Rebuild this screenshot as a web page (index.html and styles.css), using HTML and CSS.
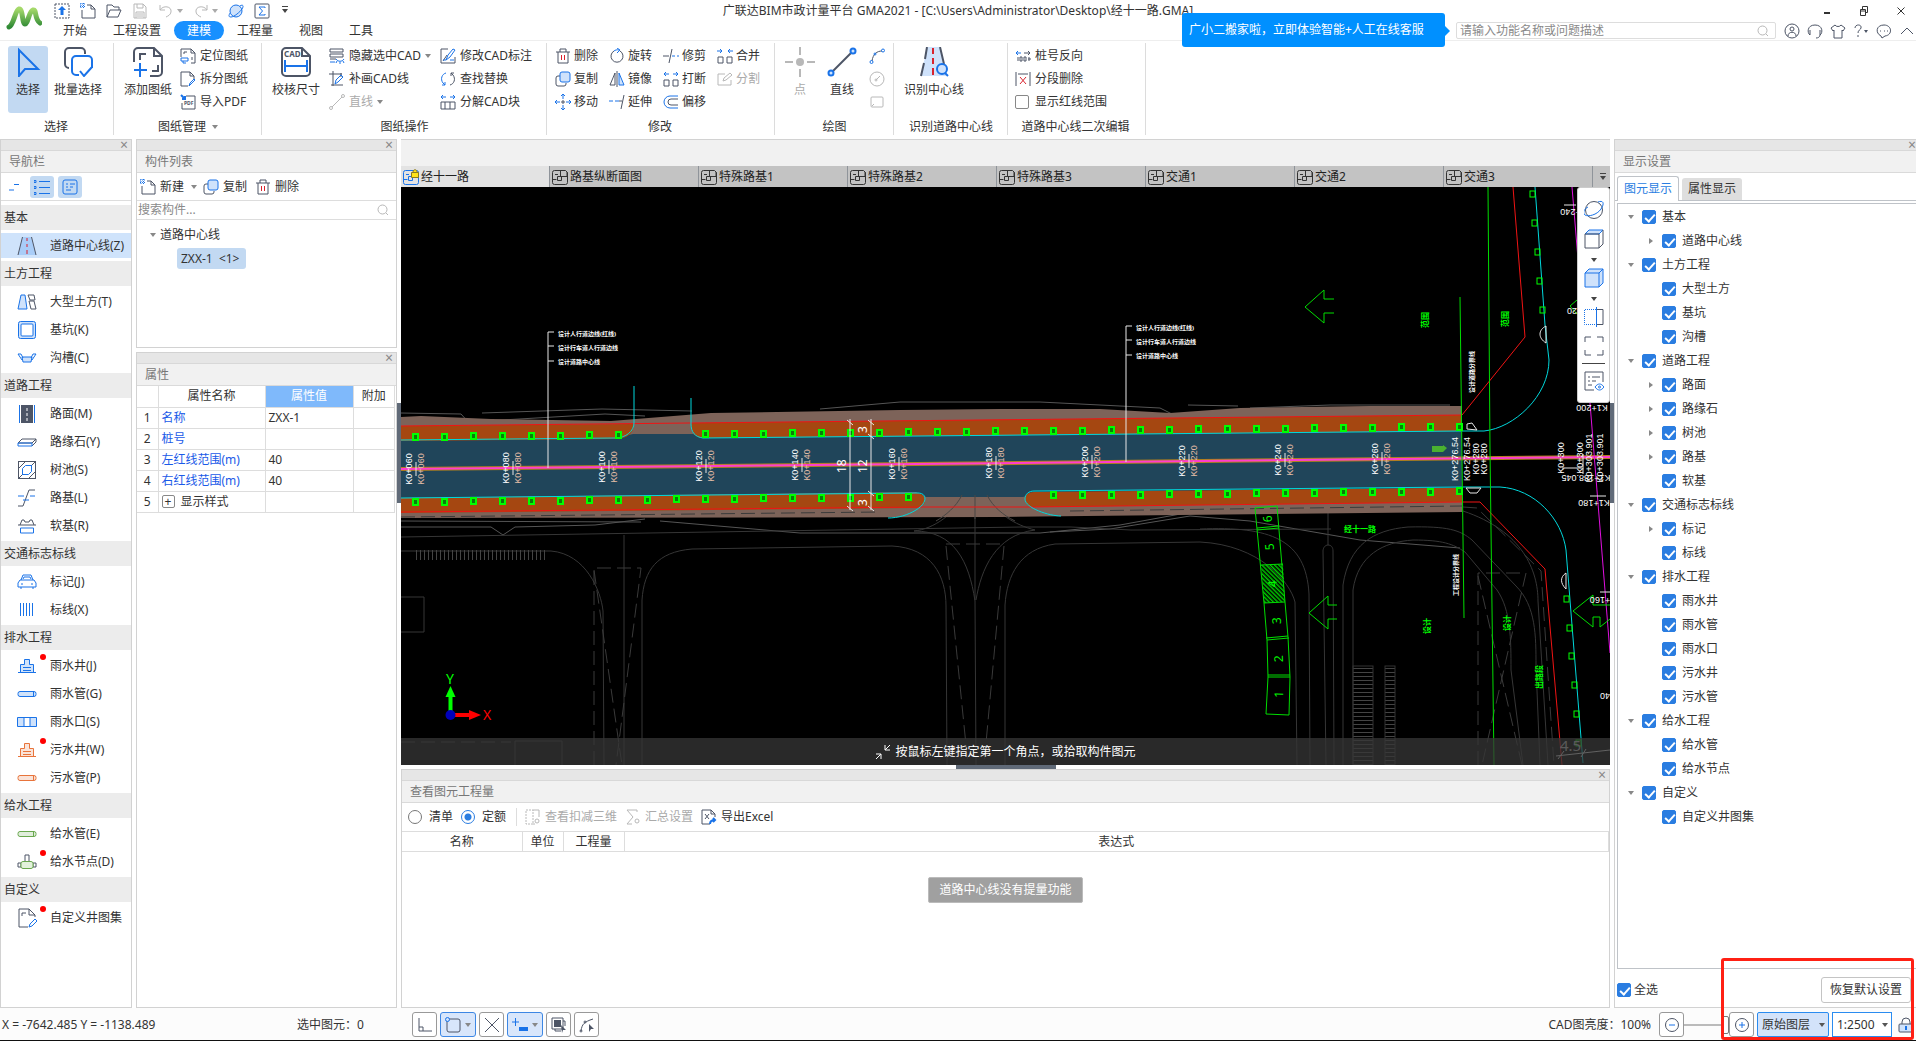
FILE: index.html
```html
<!DOCTYPE html>
<html lang="zh-CN">
<head>
  <meta charset="UTF-8">
  <title>广联达BIM市政计量平台 GMA2021</title>
  <link rel="stylesheet" href="styles.css">
</head>
<body>
  <!-- icon sprite -->
  <svg class="sprite" aria-hidden="true">
    <symbol id="i-up" viewBox="0 0 16 16"><rect class="d" x="1" y="1" width="14" height="14" stroke-dasharray="2 1"/><path class="bf" d="M8 3l4 4H9.500v5h-3V7H4z"/></symbol>
    <symbol id="i-new" viewBox="0 0 16 16"><path class="d" d="M2 7v8h13V6l-4-4H7M11 2v4h4"/><path class="b" d="M0 1h5M0 3.500h5M1 0v5M3.500 0v5" stroke-dasharray="1 1"/></symbol>
    <symbol id="i-open" viewBox="0 0 16 16"><path class="d" d="M1 14V2h5l2 2h5v3M1 14l3-7h11l-3 7z"/></symbol>
    <symbol id="i-save" viewBox="0 0 16 16"><path class="g" d="M2 1h9l3 3v11H2zM5 1v4h6V1M4 15V9h8v6M5 11h6M5 13h6"/></symbol>
    <symbol id="i-undo" viewBox="0 0 16 16"><path class="g" d="M2 2v5h5M2 7c3-5 12-4 11 2-.5 3-3 4-5 5"/></symbol>
    <symbol id="i-redo" viewBox="0 0 16 16"><path class="g" d="M14 2v5H9M14 7C11 2 2 3 3 9c.5 3 3 4 5 5"/></symbol>
    <symbol id="i-planet" viewBox="0 0 16 16"><circle class="bl" cx="8" cy="8" r="6"/><path class="b" d="M12 3c3-2 4 0 2 3S6 14 3 14s-2-2-1-4"/></symbol>
    <symbol id="i-sum" viewBox="0 0 16 16"><rect class="d" x="1" y="1" width="14" height="14" rx="1"/><path class="b" d="M11 5V4H5l3.500 4L5 12h6v-1"/></symbol>
    <symbol id="i-cursor" viewBox="0 0 30 30"><path class="b" stroke-width="2" d="M6 3v26l6-7h13z"/></symbol>
    <symbol id="i-batch" viewBox="0 0 30 30"><g stroke-width="2"><path class="d" d="M6 21a4 4 0 0 1-4-4V5a4 4 0 0 1 4-4h12a4 4 0 0 1 4 4v2"/><path class="b" d="M16 28h-3a4 4 0 0 1-4-4V13a4 4 0 0 1 4-4h12a4 4 0 0 1 4 4v8M17 24l4 5 8-9"/></g></symbol>
    <symbol id="i-adddwg" viewBox="0 0 30 30"><g stroke-width="2"><path class="d" d="M1 15V5a4 4 0 0 1 4-4h16l8 8v16a4 4 0 0 1-4 4h-8M21 1v8h8M7 13V7h6M25 18v6h-6"/><path class="b" d="M1 23h13M7 16v14"/></g></symbol>
    <symbol id="i-cad" viewBox="0 0 30 30"><g stroke-width="2"><path class="d" d="M1 12V5a4 4 0 0 1 4-4h16l8 8v16a4 4 0 0 1-4 4H5a4 4 0 0 1-4-4V12M21 1v8h8"/><path class="b" d="M4 13v12M26 13v12M4 19h22"/></g><text class="cadtxt" x="3" y="10">CAD</text></symbol>
    <symbol id="i-locate" viewBox="0 0 16 16"><path class="d" d="M1 9V1h10l4 4v10h-4M11 1v4h4M4 6V4h3M12 9v3"/><path class="b" d="M1 13V10h7v3zM3 13v2h3"/></symbol>
    <symbol id="i-split" viewBox="0 0 16 16"><path class="d" d="M8 15H1V1h9l4 4v3M10 1v4h4"/><path class="b" d="M9 15l1-3 4-4 1 1-4 4z"/></symbol>
    <symbol id="i-pdf" viewBox="0 0 16 16"><path class="d" d="M6 2h9v13H2V9"/><path class="b" stroke-width="2" d="M1 1l4 4M5 2v3H2"/><text class="pdftxt" x="4" y="11">PDF</text></symbol>
    <symbol id="i-hide" viewBox="0 0 16 16"><path class="d" d="M1 1h13v3H1zM14 6H1v3h13zM1 11h6"/><path class="b" d="M7 11c2 3 6 3 8 0M8 13l-1 2M11 14v2M14 13l1 2M1 14h5"/></symbol>
    <symbol id="i-patch" viewBox="0 0 16 16"><path class="d" d="M0 3h13M4 0v15M12 2v4M2 14h12"/><path class="b" d="M6 13l1-4 5-5 2 2-5 5z"/></symbol>
    <symbol id="i-line" viewBox="0 0 16 16"><path class="g" d="M3 13L13 3"/><circle class="g" cx="2" cy="14" r="1.500"/><circle class="g" cx="14" cy="2" r="1.500"/></symbol>
    <symbol id="i-editdim" viewBox="0 0 16 16"><path class="d" d="M8 1H1v14h14V9M3 13l4-6"/><path class="b" d="M6 12l2-5 5-6 2 1-5 7zM3 12h3M10 12h4"/></symbol>
    <symbol id="i-find" viewBox="0 0 16 16"><path class="b" d="M6 2C2 3 0 8 3 12l2 2M2 14h3v-3"/><path class="d" d="M10 14c4-1 6-6 3-10l-2-2M14 2h-3v3"/></symbol>
    <symbol id="i-explode" viewBox="0 0 16 16"><path class="b" d="M1 3h5M3 1L1 3l2 2M10 3h5M13 1l2 2-2 2"/><path class="d" d="M1 8h14v7H1zM5 8v7M10 8v7"/></symbol>
    <symbol id="i-trash" viewBox="0 0 16 16"><path class="d" d="M1 4h14M5 4V1h6v3M3 4v11h10V4"/><path class="r" d="M6.500 7v5M9.500 7v5"/></symbol>
    <symbol id="i-copy" viewBox="0 0 16 16"><path class="d" d="M5 5H3a2 2 0 0 0-2 2v6a2 2 0 0 0 2 2h6a2 2 0 0 0 2-2v-1"/><rect class="bl" x="5" y="1" width="10" height="10" rx="2"/></symbol>
    <symbol id="i-move" viewBox="0 0 16 16"><path class="b" d="M8 0v5M8 11v5M0 8h5M11 8h5M6 2l2-2 2 2M6 14l2 2 2-2M2 6L0 8l2 2M14 6l2 2-2 2"/><path class="d" d="M8 6v4M6 8h4"/></symbol>
    <symbol id="i-rotate" viewBox="0 0 16 16"><path class="d" d="M5 3a6 6 0 1 0 6 0"/><path class="b" d="M5 3c1-1 3-1.500 5-1M8 0l3 2-3 3"/></symbol>
    <symbol id="i-mirror" viewBox="0 0 16 16"><path class="d" d="M6 2v12H1z"/><path class="bl" d="M10 2v12h5z"/><path class="d" d="M8 0v16"/></symbol>
    <symbol id="i-extend" viewBox="0 0 16 16"><path class="b" d="M0 7h4M6 7h4"/><path class="d" d="M10 7h3M15 1l-3 14"/></symbol>
    <symbol id="i-trim" viewBox="0 0 16 16"><path class="d" d="M0 8h6M9 1L6 15"/><path class="b" d="M9 8h3M14 8h2"/></symbol>
    <symbol id="i-break" viewBox="0 0 16 16"><path class="b" d="M1 3h5M3 1L1 3l2 2M10 3h5M13 1l2 2-2 2"/><path class="d" d="M1 9h5v6H1zM10 9h5v6h-5z"/></symbol>
    <symbol id="i-join" viewBox="0 0 16 16"><path class="b" d="M0 3h5M3 1l2 2-2 2M11 3h5M13 1l-2 2 2 2"/><path class="d" d="M1 9h5v6H1zM10 9h5v6h-5z"/></symbol>
    <symbol id="i-offset" viewBox="0 0 16 16"><path class="b" d="M15 2H7a6 6 0 0 0 0 12h8"/><path class="d" d="M15 5H8a3 3 0 0 0 0 6h7"/></symbol>
    <symbol id="i-cut" viewBox="0 0 16 16"><path class="g" d="M8 3H1v11h13V9M6 10l1-3 6-5 2 2-6 5z"/></symbol>
    <symbol id="i-point" viewBox="0 0 30 30"><g stroke-width="2"><path class="g" d="M15 0v8M15 22v8M0 15h8M22 15h8"/></g><circle class="gf" cx="15" cy="15" r="4"/></symbol>
    <symbol id="i-seg" viewBox="0 0 30 30"><path class="d" stroke-width="2" d="M5 25L25 5"/><circle class="bl" stroke-width="2" cx="4" cy="26" r="2.500"/><circle class="bl" stroke-width="2" cx="26" cy="4" r="2.500"/></symbol>
    <symbol id="i-arc" viewBox="0 0 16 16"><path class="d" d="M3 13C4 6 8 3 13 3"/><circle class="b" cx="2.500" cy="14" r="1.500"/><circle class="b" cx="6" cy="6" r="1"/><circle class="b" cx="14" cy="2.500" r="1.500"/></symbol>
    <symbol id="i-circle" viewBox="0 0 16 16"><circle class="g" cx="8" cy="8" r="7"/><path class="g" d="M7 9l4-4"/><circle class="g" cx="7" cy="9" r="1"/></symbol>
    <symbol id="i-rect" viewBox="0 0 16 16"><rect class="g" x="2" y="3" width="12" height="10" rx="1"/><path class="g" d="M3 12l2-2"/></symbol>
    <symbol id="i-roadbig" viewBox="0 0 30 30"><path class="lf" d="M8 0h13l6 29H2z"/><path class="d" stroke-width="2" d="M8 0L6 12M5 16L2 29M21 0l4 17"/><path class="r" stroke-width="2" d="M14 1v6M14 11v6M14 21v7"/><circle class="bl" stroke-width="2" cx="23" cy="22" r="5"/><path class="b" stroke-width="2" d="M26 26l3 3"/></symbol>
    <symbol id="i-rev" viewBox="0 0 16 16"><path class="b" d="M1 5h5M3 3L1 5l2 2"/><path class="d" d="M9 5h6M13 3l2 2-2 2M3 9v4M5 9h2v4H5zM9 9h2v4H9zM14 9v4M13 11h3"/></symbol>
    <symbol id="i-segdel" viewBox="0 0 16 16"><path class="d" d="M1 1v14M15 1v14M3 3h10"/><path class="r" d="M5 6l6 7M11 6l-6 7"/></symbol>
    <symbol id="i-search" viewBox="0 0 16 16"><circle class="g" cx="7.500" cy="7.500" r="4.500"/><path class="g" d="M11 11l2 2"/></symbol>
    <symbol id="i-user" viewBox="0 0 16 16"><circle class="d" cx="8" cy="8" r="7"/><circle class="d" cx="8" cy="6" r="2"/><path class="d" d="M4 13c0-5 8-5 8 0"/></symbol>
    <symbol id="i-head" viewBox="0 0 16 16"><path class="d" d="M3 12C0 10 0 2 8 2s8 8 5 10M3 7v5M13 7v5c0 2-2 3-4 3"/></symbol>
    <symbol id="i-shirt" viewBox="0 0 16 16"><path class="d" d="M5 2L1 5l2 3 1-1v8h8V7l1 1 2-3-4-3c-1 2-5 2-6 0z"/></symbol>
    <symbol id="i-help" viewBox="0 0 16 16"><path class="d" d="M2 5c0-4 7-4 6 0-.5 2-3 2-3 5M5 12v2"/><path class="df" d="M11 7h4l-2 3z"/></symbol>
    <symbol id="i-chat" viewBox="0 0 16 16"><path class="d" d="M5 13c-6-3-5-11 3-11s9 10 1 11l-3 2z"/><path class="d" d="M4 8h1M8 8h1M11 8h1"/></symbol>
    <symbol id="i-chev" viewBox="0 0 16 16"><path class="d" d="M2 11l6-6 6 6"/></symbol>
    <symbol id="i-tab" viewBox="0 0 16 16"><path class="k" fill="#eee" d="M2.500 1.500h11l2 2v10a2 2 0 0 1-2 2h-11a2 2 0 0 1-2-2v-10a2 2 0 0 1 2-2zM8.500 2v5.500h6.500V3M0 10.500h4.500M5.500 7.500h4v4h-4zM3 5.500h3"/></symbol>
    <symbol id="i-tabon" viewBox="0 0 16 16"><path class="b" fill="#fff" d="M2.500 1.500h11a2 2 0 0 1 2 2v10a2 2 0 0 1-2 2h-11a2 2 0 0 1-2-2v-10a2 2 0 0 1 2-2zM0 10.500h4.500M5.500 7.500h4v4h-4zM3 5.500h3"/><path fill="#ffe21a" stroke="#8a7a20" d="M8.500 3.500h7v5h-7zM10 3c0-3 4-3 4 0"/></symbol>

    <symbol id="n-road" viewBox="0 0 20 20"><path class="lf deep" d="M6 1h8l5 18H1z"/><path class="d" d="M5.500 1L1 19M14.500 1L19 19"/><path class="r" d="M10 2v3M10 8v3M10 14v4"/></symbol>
    <symbol id="n-earth" viewBox="0 0 20 20"><path class="bl" d="M4 3h4l2 14H1z"/><path class="d" d="M11 3h6l1 5h-5zM12 9h5l2 8h-5z"/></symbol>
    <symbol id="n-pit" viewBox="0 0 20 20"><rect class="bl" x="1.500" y="1.500" width="17" height="17" rx="2"/><rect class="bw" x="4" y="4" width="12" height="12" rx="1"/></symbol>
    <symbol id="n-ditch" viewBox="0 0 20 20"><path class="bl" d="M5 9h10l-1 5H6z"/><path class="b" d="M1 6h3l2 4M19 6h-3l-2 4M1 6l4 6M19 6l-4 6"/></symbol>
    <symbol id="n-pave" viewBox="0 0 20 20"><path class="df" d="M4 1h12v18H4z"/><path class="b" d="M2.500 1v18M17.500 1v18"/><path stroke="#fff" d="M10 4v3M10 9v3M10 14v3"/></symbol>
    <symbol id="n-curb" viewBox="0 0 20 20"><path class="d" d="M1 11l4-4h14l-4 4zM19 7v3l-4 4"/><path class="b" d="M1 11h14v3H1z"/></symbol>
    <symbol id="n-tree" viewBox="0 0 20 20"><rect class="d" x="1.500" y="1.500" width="17" height="17"/><path class="d" d="M2 8l6-6M12 18l6-6M2 18l4-4M14 6l4-4"/><path class="b" d="M5.500 8.500l3-3h6v6l-3 3h-6z"/></symbol>
    <symbol id="n-bed" viewBox="0 0 20 20"><path class="d" d="M1 18h5l6-16h6"/><path class="b" d="M1 8h6M13 8h5M6 12h6"/></symbol>
    <symbol id="n-soft" viewBox="0 0 20 20"><path class="d" d="M1 9h18M3 9l2-5h2l1 2h4l1-2h2l2 5"/><path class="b" d="M3.500 12h13v5h-13z"/></symbol>
    <symbol id="n-car" viewBox="0 0 20 20"><path class="b" d="M4 8l2-5h8l2 5M3 8h14l2 3v4H1v-4zM6 7l1-2h6l1 2M4 15v2M16 15v2M4 12h2M14 12h2"/></symbol>
    <symbol id="n-lines" viewBox="0 0 20 20"><path class="b" d="M3.500 3v13M6.500 3v13M9.500 3v13M12.500 3v13M15.500 3v13"/></symbol>
    <symbol id="n-well" viewBox="0 0 20 20"><path fill="currentColor" fill-opacity=".2" stroke="currentColor" d="M1 16.500h18M3.500 16V8.500h4v-5h5v5h4V16M6 11.500h8M6 14.500h8"/></symbol>
    <symbol id="n-pipe" viewBox="0 0 20 20"><rect fill="currentColor" fill-opacity=".2" stroke="currentColor" x="1" y="7.500" width="18" height="5" rx="2"/><path stroke="currentColor" d="M16.500 8v4"/></symbol>
    <symbol id="n-inlet" viewBox="0 0 20 20"><path class="bl" d="M.5 5.500h19v9H.5z"/><path class="bw" d="M7 5.500h6v9H7z"/></symbol>
    <symbol id="n-node" viewBox="0 0 20 20"><path class="d" d="M8 9V3h4v6M1 11h3v4H1zM16 11h3v4h-3z"/><rect fill="#e3f2dc" stroke="#6aa84f" x="4" y="9.500" width="12" height="7" rx="2"/></symbol>
    <symbol id="n-custom" viewBox="0 0 20 20"><path class="d" d="M11 19H2V1h10l6 6v2M12 1v6h6M5 8V5h4"/><path class="b" d="M12 19l1-3 5-5 2 2-5 5z"/></symbol>
  </svg>

  <header class="topbar">
    <svg class="logo" viewBox="0 0 36 26"><defs><linearGradient id="lg" x1="0" y1="0" x2="0" y2="1"><stop offset="0" stop-color="#a5d96a"/><stop offset="1" stop-color="#2f8a35"/></linearGradient></defs><path d="M3 22C8 20 9 5 13 4s3 15 6 15 4-13 8-14 1 9 7 13" fill="none" stroke="url(#lg)" stroke-width="5" stroke-linecap="round"/></svg>
    <div class="quick">
      <button class="tool" aria-label="升级"><svg><use href="#i-up"/></svg></button>
      <button class="tool" aria-label="新建"><svg><use href="#i-new"/></svg></button>
      <button class="tool" aria-label="打开"><svg><use href="#i-open"/></svg></button>
      <button class="tool" aria-label="保存"><svg><use href="#i-save"/></svg></button>
      <button class="tool" aria-label="撤销"><svg><use href="#i-undo"/></svg><i class="caret"></i></button>
      <button class="tool" aria-label="恢复"><svg><use href="#i-redo"/></svg><i class="caret"></i></button>
      <button class="tool" aria-label="三维"><svg><use href="#i-planet"/></svg></button>
      <button class="tool" aria-label="汇总"><svg><use href="#i-sum"/></svg></button>
      <button class="tool more" aria-label="更多"><i class="caret dark bar-top"></i></button>
    </div>
    <div class="title">广联达BIM市政计量平台 GMA2021 - [C:\Users\Administrator\Desktop\经十一路.GMA]</div>
    <div class="winctl">
      <button aria-label="最小化"><svg viewBox="0 0 12 12"><path class="k" stroke-width="2" d="M3 8h6"/></svg></button>
      <button aria-label="还原"><svg viewBox="0 0 12 12"><path class="k" d="M2.500 4.500h5v6h-5zM4.500 4V1.500h5v6H8M2.500 6h5"/></svg></button>
      <button aria-label="关闭"><svg viewBox="0 0 12 12"><path class="k" d="M2.500 2.500l7 7M9.500 2.500l-7 7"/></svg></button>
    </div>
    <nav class="menu">
      <a href="#">开始</a><a href="#">工程设置</a><a href="#" class="on">建模</a><a href="#">工程量</a><a href="#">视图</a><a href="#">工具</a>
    </nav>
    <div class="tools">
      <label class="search"><input type="text" placeholder="请输入功能名称或问题描述" aria-label="搜索功能"><svg><use href="#i-search"/></svg></label>
      <button class="tool" aria-label="用户"><svg><use href="#i-user"/></svg></button>
      <button class="tool" aria-label="客服"><svg><use href="#i-head"/></svg></button>
      <button class="tool" aria-label="皮肤"><svg><use href="#i-shirt"/></svg></button>
      <button class="tool" aria-label="帮助"><svg><use href="#i-help"/></svg></button>
      <button class="tool" aria-label="消息"><svg><use href="#i-chat"/></svg></button>
      <button class="tool" aria-label="收起"><svg><use href="#i-chev"/></svg></button>
    </div>
    <div class="banner">广小二搬家啦，立即体验智能+人工在线客服</div>
  </header>

  <section class="ribbon">
    <div class="group g-select">
      <div class="cmds">
        <button class="big active"><svg><use href="#i-cursor"/></svg>选择</button>
        <button class="big"><svg><use href="#i-batch"/></svg>批量选择</button>
      </div>
      <h3>选择</h3>
    </div>
    <div class="group g-sheet">
      <div class="cmds">
        <button class="big"><svg><use href="#i-adddwg"/></svg>添加图纸</button>
        <div class="col">
          <button><svg><use href="#i-locate"/></svg>定位图纸</button>
          <button><svg><use href="#i-split"/></svg>拆分图纸</button>
          <button><svg><use href="#i-pdf"/></svg>导入PDF</button>
        </div>
      </div>
      <h3>图纸管理<i class="caret"></i></h3>
    </div>
    <div class="group g-cad">
      <div class="cmds">
        <button class="big"><svg><use href="#i-cad"/></svg>校核尺寸</button>
        <div class="col first">
          <button><svg><use href="#i-hide"/></svg>隐藏选中CAD<i class="caret"></i></button>
          <button><svg><use href="#i-patch"/></svg>补画CAD线</button>
          <button class="off"><svg><use href="#i-line"/></svg>直线<i class="caret"></i></button>
        </div>
        <div class="col">
          <button><svg><use href="#i-editdim"/></svg>修改CAD标注</button>
          <button><svg><use href="#i-find"/></svg>查找替换</button>
          <button><svg><use href="#i-explode"/></svg>分解CAD块</button>
        </div>
      </div>
      <h3>图纸操作</h3>
    </div>
    <div class="group g-edit">
      <div class="cmds four">
        <button><svg><use href="#i-trash"/></svg>删除</button>
        <button><svg><use href="#i-rotate"/></svg>旋转</button>
        <button><svg><use href="#i-trim"/></svg>修剪</button>
        <button><svg><use href="#i-join"/></svg>合并</button>
        <button><svg><use href="#i-copy"/></svg>复制</button>
        <button><svg><use href="#i-mirror"/></svg>镜像</button>
        <button><svg><use href="#i-break"/></svg>打断</button>
        <button class="off"><svg><use href="#i-cut"/></svg>分割</button>
        <button><svg><use href="#i-move"/></svg>移动</button>
        <button><svg><use href="#i-extend"/></svg>延伸</button>
        <button><svg><use href="#i-offset"/></svg>偏移</button>
      </div>
      <h3>修改</h3>
    </div>
    <div class="group g-draw">
      <div class="cmds">
        <button class="big off"><svg><use href="#i-point"/></svg>点</button>
        <button class="big"><svg><use href="#i-seg"/></svg>直线</button>
        <div class="col">
          <button aria-label="弧线"><svg><use href="#i-arc"/></svg></button>
          <button aria-label="圆"><svg><use href="#i-circle"/></svg></button>
          <button aria-label="矩形"><svg><use href="#i-rect"/></svg></button>
        </div>
      </div>
      <h3>绘图</h3>
    </div>
    <div class="group g-find">
      <div class="cmds"><button class="big"><svg><use href="#i-roadbig"/></svg>识别中心线</button></div>
      <h3>识别道路中心线</h3>
    </div>
    <div class="group g-second">
      <div class="cmds">
        <div class="col">
          <button><svg><use href="#i-rev"/></svg>桩号反向</button>
          <button><svg><use href="#i-segdel"/></svg>分段删除</button>
          <label class="check"><input type="checkbox">显示红线范围</label>
        </div>
      </div>
      <h3>道路中心线二次编辑</h3>
    </div>
  </section>

  <main class="work">
    <aside class="panel nav">
      <div class="strip"><button aria-label="关闭导航栏">×</button></div>
      <h2>导航栏</h2>
      <div class="navtools">
        <button aria-label="折叠"><svg viewBox="0 0 16 16"><path class="b" d="M3 11h5M8 5.500h5"/></svg></button>
        <button class="on" aria-label="列表"><svg viewBox="0 0 16 16"><path class="b" d="M5 2.500h11M5 8.500h11M5 14.500h11M0 1.500h2v2H0zM0 7.500h2v2H0zM0 13.500h2v2H0z"/></svg></button>
        <button class="on" aria-label="详情"><svg viewBox="0 0 16 16"><rect class="b" x="1" y="1" width="14" height="14" rx="2"/><path class="b" d="M4 5h2M8 5h5M4 8h2M8 8h3M4 11h5"/></svg></button>
      </div>
      <div class="navlist" id="navlist"></div>
    </aside>

    <div class="middle">
      <section class="panel parts">
        <div class="strip"><button aria-label="关闭构件列表">×</button></div>
        <h2>构件列表</h2>
        <div class="parttools">
          <button><svg><use href="#i-new"/></svg>新建<i class="caret"></i></button>
          <button><svg><use href="#i-copy"/></svg>复制</button>
          <button><svg><use href="#i-trash"/></svg>删除</button>
        </div>
        <label class="partsearch"><input type="text" placeholder="搜索构件..." aria-label="搜索构件"><svg><use href="#i-search"/></svg></label>
        <ul class="parttree">
          <li><i class="caret"></i>道路中心线
            <ul><li><span class="chip">ZXX-1 &nbsp;&lt;1&gt;</span></li></ul>
          </li>
        </ul>
      </section>
      <section class="panel props">
        <div class="strip"><button aria-label="关闭属性">×</button></div>
        <h2>属性</h2>
        <table>
          <thead><tr><th class="c1"></th><th class="c2">属性名称</th><th class="c3">属性值</th><th class="c4">附加</th></tr></thead>
          <tbody>
            <tr><td>1</td><td class="key">名称</td><td>ZXX-1</td><td></td></tr>
            <tr><td>2</td><td class="key">桩号</td><td></td><td></td></tr>
            <tr><td>3</td><td class="key">左红线范围(m)</td><td>40</td><td></td></tr>
            <tr><td>4</td><td class="key">右红线范围(m)</td><td>40</td><td></td></tr>
            <tr><td>5</td><td><button class="expand" aria-label="展开">+</button>显示样式</td><td></td><td></td></tr>
          </tbody>
        </table>
      </section>
    </div>

    <div class="vsplit"><span></span></div>

    <div class="center">
      <div class="blank"></div>
      <div class="sheets">
        <button class="on"><svg><use href="#i-tabon"/></svg>经十一路</button>
        <button><svg><use href="#i-tab"/></svg>路基纵断面图</button>
        <button><svg><use href="#i-tab"/></svg>特殊路基1</button>
        <button><svg><use href="#i-tab"/></svg>特殊路基2</button>
        <button><svg><use href="#i-tab"/></svg>特殊路基3</button>
        <button><svg><use href="#i-tab"/></svg>交通1</button>
        <button><svg><use href="#i-tab"/></svg>交通2</button>
        <button><svg><use href="#i-tab"/></svg>交通3</button>
        <button class="list" aria-label="全部图纸"><i class="caret dark bar-top"></i></button>
      </div>
      <div class="view">
        <svg class="cad" viewBox="401 187 1209 578" preserveAspectRatio="xMinYMin slice">
          <defs>
            <pattern id="hatch" width="3" height="3" patternUnits="userSpaceOnUse" patternTransform="rotate(-45)"><path d="M0 0v3" stroke="#0c0" stroke-width="3"/></pattern>
            <pattern id="stalls" width="4" height="10" patternUnits="userSpaceOnUse"><path d="M.5 0v10" stroke="#444"/></pattern>
            <pattern id="rungs" width="10" height="4" patternUnits="userSpaceOnUse"><path d="M0 .5h10" stroke="#444"/></pattern>
          </defs>
          <!-- existing terrain and side roads -->
          <g class="terrain">
            <path d="M401 413l60 1 10 11 14-4 120-7 40 2M482 413l120-4 90 2M820 409l80-7h140l120 6 12 6M1188 405l50 1M1250 408l80-3h120"/>
            <path d="M401 527h90l12 8 12-8 80-2 50-6M660 521l140 12h240l80-8 110-20M401 521l240 1M1050 532l60-3 80-13 60 5 110 19 100 8"/>
            <path class="dim" d="M401 537l620-10h50l60 3M1131 530l200-1M401 551h150c35 3 50 40 52 60l1 154M624 535v230M642 765V600c2-30 15-48 50-51l200-3c40 2 54 30 54 60l1 159M1005 765V605c2-30 15-56 50-61l145-2c60 3 90 40 95 60l2 163M962 495c-6 18-28 34-48 36 40 0 55 30 61 70l1 164M987 495c8 18 28 30 48 35-40 5-54 40-59 70M975 495v105"/>
            <path class="dim" d="M1200 529c70-3 106 10 109 65l1 171M1328 513v32c-3 0-5 3-5 6l3 214M1334 765l-1-214c0-4-2-6-5-6M1343 765V585c6-40 30-55 65-58 40-1 52 3 64 13l44 46c20 20 20 50 20 80l4 99M1353 765V590c5-35 30-48 60-50 30 0 40 4 52 12l32 38c14 20 14 50 14 80l12 95M1463 511c60 20 75 60 75 90l10 164"/>
            <path class="dash" d="M594 765V568h47l-25 197M594 570l28 195M946 546l22 219M1004 546l-20 219M946 544h58M1478 765V573h48l-44 192M1478 576l44 189M1463 507l14 1 64 63 13 194M401 742h110"/>
            <path class="dim" d="M401 597h23v35h-23M515 765v-24h47v24"/>
          </g>
          <rect x="413" y="550" width="132" height="10" fill="url(#stalls)"/>
          <rect x="1353" y="666" width="20" height="99" fill="url(#rungs)" stroke="#333"/>
          <rect x="1385" y="666" width="10" height="99" fill="url(#rungs)" stroke="#333"/>

          <!-- road body -->
          <path fill="#7d6359" d="M401 417l20-1 70 3 120 2 100-8 189-3 100-1h100l70 4 70-5 130-2h92v106l-462 5-599 1z"/>
          <path fill="#20455a" d="M401 440l214-2 18-4h60l10 4 759-7v57l-424 5-15 4h-97l-10-5-515 6z"/>
          <path fill="#a54711" d="M401 426l233-2c0 10-8 15-19 15l-214 2zM691 423l771-8v16l-759 7c-8 0-12-6-12-15z"/>
          <path fill="#a54711" d="M401 498l515-5c8 0 9 6 9 10l-8 5-516 5zM1034 492l428-4v14l-432 5c-8-6-6-15 4-15z"/>
          <path class="dash brown" d="M401 517l200-2 280-3M1070 511l392-5"/>
          <path class="curve" d="M962 495c-6 12-16 20-26 26M987 495c6 12 16 20 28 26M975 495v24"/>
          <path class="redline" d="M401 426l1061-11M401 512l520-5M921 507h107M1028 507l434-5h18l65 67 17 196M1462 415l63-78-12-150"/>
          <path class="cyan" d="M401 440l214-2c11 0 19-7 19-15v-37M691 398v26c0 8 4 13 12 14l759-7h22c30-3 65-35 65-71l-4-35-10-138M401 498l515-5c12-1 12 10 0 17-8 5-18 8-28 8M1061 516c-12 0-36-8-36-17 0-5 4-8 9-8l428-4h38c35 2 62 32 66 63l17 213"/>
          <path class="axis-edge" d="M401 469l1209-12"/>
          <path class="axis" d="M401 469l1209-12"/>
          <path class="magenta" d="M1572 187l18 216 20 250"/>
          <path class="green" d="M1488 187l2 263 4 315M1460 297l4 321"/>
          <path class="green" d="M1334 299h-10v-9l-19 17 19 16v-10h10M1337 605h-9v-9l-19 17 19 16v-10h9M1610 605h-17v-10l-20 16 20 16v-10h7v10l10-8M1577 300l-7 6 7 8"/>
          <path fill="#4ab030" d="M1432 446h11v-1l4 3-4 4h-11z"/>
          <g id="markers"></g>
          <g id="stations"></g>

          <!-- notes -->
          <path class="white" d="M554 332h-6v136M548 346h6M548 361h6M1132 326h-6v136M1126 340h6M1126 355h6"/>
          <g class="note">
            <text x="558" y="336">设计人行道边线(红线)</text><text x="558" y="350">设计行车道人行道边线</text><text x="558" y="364">设计道路中心线</text>
            <text x="1136" y="330">设计人行道边线(红线)</text><text x="1136" y="344">设计行车道人行道边线</text><text x="1136" y="358">设计道路中心线</text>
            <text transform="translate(1474 393) rotate(-90)">设计道路分界线</text><text transform="translate(1458 596) rotate(-90)">工程设计分界线</text>
          </g>
          <path class="white" d="M850 419v91M871 419v91M847 420l6 5M868 420l6 5M868 434l6 5M868 491l6 5M847 506l6 5M868 506l6 5"/>
          <g class="dims">
            <text transform="translate(846 473) rotate(-90)">18</text><text transform="translate(867 433) rotate(-90)">3</text><text transform="translate(867 473) rotate(-90)">12</text><text transform="translate(867 506) rotate(-90)">3</text>
          </g>
          <g class="white"><path d="M1467 429v-5l5-1 5 7zM1466 488h15l-4 5h-7zM1546 326c-8 4-8 12 0 17zM1566 573c-6 4-6 10 0 16zM1562 468h20M1583 454v20M1564 205h12M1590 496h16M1600 592h10"/></g>
          <g class="greennote">
            <text transform="translate(1428 328) rotate(-90)">范围</text><text transform="translate(1508 327) rotate(-90)">范围</text><text transform="translate(1430 634) rotate(-90)">设计</text><text transform="translate(1510 631) rotate(-90)">设计</text><text x="1344" y="532">经十一路</text><text transform="translate(1542 689) rotate(-90)">出路段</text>
          </g>

          <!-- numbered strip -->
          <path fill="url(#hatch)" d="M1261 565l22-1 2 38-21 1z"/>
          <path class="green" d="M1255 508l22-2 8 96 3 35 2 40-1 38-23-1 2-37-1-37-3-37zM1257 528l22-2M1257 530l22-2M1261 565l22-1M1264 603l21-1M1266 638l22-2M1267 640l22-2M1268 675h22M1268 677h22"/>
          <g class="strip-no">
            <text transform="translate(1272 522) rotate(-94)">6</text><text transform="translate(1274 550) rotate(-94)">5</text><text transform="translate(1277 587) rotate(-94)">4</text><text transform="translate(1281 624) rotate(-92)">3</text><text transform="translate(1283 662) rotate(-92)">2</text><text transform="translate(1283 698) rotate(-88)">1</text>
          </g>

          <!-- coordinate axes -->
          <path stroke="#0f0" stroke-width="4" d="M450.500 715v-20"/><path fill="#0f0" d="M450.500 686l5 11h-10z"/>
          <path stroke="red" stroke-width="4" d="M450 715h20"/><path fill="red" d="M481 715l-12 5v-10z"/>
          <circle cx="450.500" cy="715" r="5" fill="#00b"/>
          <text class="ax" x="446" y="684" fill="#0f0">Y</text><text class="ax" x="483" y="720" fill="red">X</text>

          <path class="white" d="M1556 756l54-6M1558 759l6-8M1581 757l5-8"/><text class="mid" x="1560" y="751">4.5</text>
        </svg>
        <div class="viewtools">
          <button aria-label="动态观察"><svg viewBox="0 0 20 20"><circle class="d" cx="10" cy="10" r="8.500"/><path class="b" d="M14 2c5-2 7 1 3 7S4 17 1 15s0-7 3-8"/></svg></button>
          <button aria-label="视角"><svg viewBox="0 0 20 20"><path class="bl" d="M1 5l4-4h14l-4 4z"/><path class="d" d="M1 5h14v14H1zM15 19l4-4V1"/></svg></button>
          <i class="caret dark"></i>
          <button aria-label="实体"><svg viewBox="0 0 20 20"><path class="bl" d="M1 5l4-4h14v14l-4 4H1zM1 5h14v14M15 5l4-4"/></svg></button>
          <i class="caret dark"></i>
          <button aria-label="剖切"><svg viewBox="0 0 20 20"><path class="b" stroke-dasharray="1 1" d="M12 2.500H.5v15H12"/><path class="b" d="M12.500 0v20"/><path class="d" d="M13 2.500h6v15h-6"/></svg></button>
          <button aria-label="全屏"><svg viewBox="0 0 20 20"><path class="d" d="M1 6V1h6M13 1h6v5M19 14v5h-6M7 19H1v-5"/></svg></button>
          <hr>
          <button aria-label="显示设置"><svg viewBox="0 0 20 20"><path class="d" d="M10 19H1V1h18v10M4 6h2M8 6h8M4 10h2M8 10h4M4 14h4"/><path class="b" d="M11 16c3-4 6-4 9 0-3 4-6 4-9 0z"/><circle class="b" cx="15.500" cy="16" r="1"/></svg></button>
        </div>
        <div class="hint"><svg viewBox="0 0 16 16"><path d="M15 1l-5 5V1M10 6h5M1 15l5-5v5M6 10H1"/></svg>按鼠标左键指定第一个角点，或拾取构件图元</div>
      </div>
      <div class="hsplit"><span></span></div>
      <section class="panel result">
        <div class="strip"><button aria-label="关闭工程量">×</button></div>
        <h2>查看图元工程量</h2>
        <div class="resulttools">
          <label><input type="radio" name="mode">清单</label>
          <label><input type="radio" name="mode" checked>定额</label>
          <span class="bar"></span>
          <button class="off"><svg viewBox="0 0 16 16"><path class="g" stroke-dasharray="2 1" d="M1 1h7v14H1z"/><path class="g" d="M8 1h6v7M8 15h2"/><circle class="g" cx="12" cy="12" r="2"/></svg>查看扣减三维</button>
          <button class="off"><svg viewBox="0 0 16 16"><path class="g" d="M12 3V1H2l6 7-6 7h5"/><circle class="g" cx="12" cy="12" r="2"/></svg>汇总设置</button>
          <button><svg viewBox="0 0 16 16"><path class="d" d="M9 15H1V1h9l4 4v3M10 1v4h4M4 5l4 5M8 5l-4 5"/><path class="b" stroke-width="2" d="M9 15c0-3 2-4 5-4M12 9l2 2-2 2"/></svg>导出Excel</button>
        </div>
        <table>
          <thead><tr><th class="w1">名称</th><th class="w2">单位</th><th class="w3">工程量</th><th>表达式</th></tr></thead>
        </table>
        <div class="toastbox"><span class="toast">道路中心线没有提量功能</span></div>
      </section>
    </div>

    <div class="vsplit"><span></span></div>

    <aside class="panel display">
      <div class="strip"><button aria-label="关闭显示设置">×</button></div>
      <h2>显示设置</h2>
      <div class="dtabs"><button class="on">图元显示</button><button>属性显示</button></div>
      <div class="dbody">
        <ul class="layers" id="layers"></ul>
      </div>
      <div class="dfoot">
        <label class="check"><input type="checkbox" checked>全选</label>
        <button>恢复默认设置</button>
      </div>
    </aside>
  </main>

  <footer class="status">
    <span class="coord">X = -7642.485 Y = -1138.489</span>
    <span class="picked">选中图元：0</span>
    <div class="modes">
      <button aria-label="正交"><svg viewBox="0 0 16 16"><path class="d" d="M2 1v13h13M2 10h4v4"/></svg></button>
      <button class="on" aria-label="捕捉"><svg viewBox="0 0 16 16"><rect class="d" x="2" y="2" width="13" height="13" rx="2"/><circle class="bl" cx="2.500" cy="2.500" r="2"/></svg><i class="caret"></i></button>
      <button aria-label="交点"><svg viewBox="0 0 16 16"><path class="d" d="M1 1l14 14M15 1L1 15"/></svg></button>
      <button class="on" aria-label="动态输入"><svg viewBox="0 0 16 16"><path class="b" d="M0 5h7M3.500 1v8"/><path class="bf" d="M7 10h9v4H7z"/></svg><i class="caret"></i></button>
      <button aria-label="选择叠加"><svg viewBox="0 0 16 16"><path class="df" d="M3 3h7v7H3z"/><path class="d" d="M1 1h11v11H1zM12 4h2v5M4 12v2h6"/><path class="df" d="M10 8l5 5h-3l-1 3z"/></svg></button>
      <button aria-label="夹点"><svg viewBox="0 0 16 16"><path class="d" d="M2 14C3 7 5 5 14 2"/><circle class="d" cx="2" cy="14" r="1"/><circle class="d" cx="6" cy="5" r="1"/><path class="df" d="M10 7l5 5h-3l-2 3z"/></svg></button>
    </div>
    <div class="zoomer">
      <label for="bright">CAD图亮度：100%</label>
      <button aria-label="减"><svg viewBox="0 0 16 16"><circle class="d" cx="8" cy="8" r="6.500"/><path class="b" d="M5 8h6"/></svg></button>
      <input type="range" id="bright" value="100">
      <button aria-label="加"><svg viewBox="0 0 16 16"><circle class="d" cx="8" cy="8" r="6.500"/><path class="b" d="M5 8h6M8 5v6"/></svg></button>
      <span class="pick layer"><select aria-label="图层"><option>原始图层</option></select></span>
      <span class="pick scale"><select aria-label="比例"><option>1:2500</option></select></span>
      <svg class="lock" viewBox="0 0 16 16"><path class="d" d="M4 7V5a4 4 0 0 1 8 0v2"/><rect class="lockbody" x="1" y="7" width="14" height="8" rx="1"/><path class="b" stroke-width="2" d="M8 9v4"/></svg>
    </div>
    <div class="mark"></div>
  </footer>

  <script src="app.js"></script>
</body>
</html>
```

FILE: styles.css
```css
* {
  box-sizing: border-box;
}
body {
  margin: 0;
  height: 100vh;
  display: flex;
  flex-direction: column;
  overflow: hidden;
  background: #fff;
  color: #333;
  font: 12px/18px "Noto Sans", "Noto Sans CJK SC", sans-serif;
}
button, input, select {
  font: inherit;
  color: inherit;
}
button {
  display: flex;
  align-items: center;
  gap: 4px;
  padding: 0;
  border: 0;
  background: none;
  white-space: nowrap;
}
svg {
  display: block;
  flex: none;
  width: 16px;
  height: 16px;
}
h2, h3 {
  margin: 0;
  font-size: 12px;
  font-weight: normal;
}
ul {
  list-style: none;
  margin: 0;
  padding: 0;
}
table {
  border-collapse: collapse;
}
th {
  font-weight: normal;
}

/* icon strokes */
.sprite { display: none; }
.d { fill: none; stroke: #4d5566; }
.b { fill: none; stroke: #1a73e8; }
.r { fill: none; stroke: #d9232e; }
.g { fill: none; stroke: #b8b8b8; }
.k { stroke: #333; fill: none; }
.bl { fill: #cfe2fb; stroke: #1a73e8; }
.bw { fill: #fff; stroke: #1a73e8; }
.bf { fill: #1a73e8; }
.df { fill: #4d5566; }
.gf { fill: #b8b8b8; }
.lf { fill: #cfe2fb; }
.deep { fill: #a9cdf8; }
.lockbody { fill: #cfe2fb; stroke: #4d5566; }
.cadtxt { font-size: 8px; font-weight: bold; fill: #4d5566; }
.pdftxt { font-size: 5px; font-weight: bold; fill: #4d5566; }

.caret {
  border: 3px solid transparent;
  border-top: 4px solid #888;
  border-bottom: 0;
}
.caret.dark { border-top-color: #444; }
.bar-top {
  position: relative;
}
.bar-top::before {
  content: "";
  position: absolute;
  left: -3px;
  top: -7px;
  width: 6px;
  border-top: 1px solid #444;
}

/* title and menu */
.topbar {
  position: relative;
  display: grid;
  grid-template: 21px 19px / 50px 1fr auto 1fr 50px;
  border-bottom: 1px solid #eee;
}
.logo {
  grid-row: 1 / 3;
  width: 36px;
  height: 26px;
  margin: 5px 0 0 6px;
}
.quick {
  display: flex;
  align-items: center;
  padding-left: 4px;
  gap: 10px;
}
.quick .caret { margin-left: -1px; border-top-color: #aaa; }
.quick .more .caret { margin-left: 2px; border-top-color: #444; }
.title {
  padding-top: 2px;
}
.winctl {
  grid-column: 4 / 6;
  display: flex;
  justify-content: flex-end;
  align-items: center;
  gap: 25px;
  padding-right: 9px;
}
.winctl svg { width: 12px; height: 12px; }
.menu {
  grid-column: 2;
  display: flex;
}
.menu a {
  padding: 0 13px;
  line-height: 19px;
  height: 19px;
  color: #333;
  text-decoration: none;
  border-radius: 10px;
}
.menu .on {
  background: #1890ff;
  color: #fff;
}
.tools {
  grid-column: 4 / 6;
  display: flex;
  justify-content: flex-end;
  align-items: center;
  gap: 7px;
  padding-right: 1px;
}
.search {
  display: flex;
  align-items: center;
  width: 320px;
  height: 17px;
  margin-right: 1px;
  border: 1px solid #ddd;
  border-radius: 2px;
}
.search input {
  flex: 1;
  padding: 0 3px;
}
.search svg { margin-right: 4px; }
.search input, .partsearch input {
  min-width: 0;
  height: 16px;
  border: 0;
  outline: 0;
  background: none;
}
input::placeholder { color: #8a8a8a; }
.banner {
  position: absolute;
  right: 471px;
  top: 13px;
  width: 263px;
  height: 34px;
  padding-left: 7px;
  line-height: 34px;
  border-radius: 3px;
  background: #0090ff;
  color: #fff;
  z-index: 2;
}
.banner::after {
  content: "";
  position: absolute;
  left: 100%;
  top: 13px;
  border: 5px solid transparent;
  border-left-color: #0090ff;
  border-right: 0;
}

/* ribbon */
.ribbon {
  display: flex;
  height: 98px;
  padding-top: 2px;
}
.group {
  display: flex;
  flex-direction: column;
  position: relative;
  padding: 1px 0 0 10px;
}
.group::after {
  content: "";
  position: absolute;
  right: 0;
  top: 0;
  height: 92px;
  border-right: 1px solid #dcdcdc;
}
.group h3 {
  margin-left: -10px;
  line-height: 28px;
  display: flex;
  justify-content: center;
  align-items: center;
  gap: 6px;
}
.cmds {
  display: flex;
  height: 69px;
}
.cmds button { height: 23px; }
.cmds .big {
  flex-direction: column;
  height: 67px;
  margin-top: 2px;
  padding-top: 1px;
  border-radius: 3px;
}
.big svg { width: 30px; height: 30px; }
.big.active { background: #c2d9f2; width: 40px; }
.cmds .off, .resulttools .off { color: #aaa; }
.four {
  display: grid;
  grid-template-columns: repeat(4, 54px);
}
.g-select { width: 114px; padding-left: 8px; }
.g-select .cmds { gap: 6px; }
.g-sheet { width: 148px; }
.g-sheet .cmds { gap: 8px; }
.g-cad { width: 285px; }
.g-cad .cmds { gap: 9px; }
.g-cad .first { width: 102px; }
.g-edit { width: 228px; padding-left: 8px; }
.g-edit button { gap: 3px; }
.g-draw { width: 119px; }
.g-draw .cmds { gap: 12px; }
.g-draw .big { width: 30px; }
.g-find { width: 114px; }
.g-second { width: 138px; padding-left: 7px; }
.check {
  display: flex;
  align-items: center;
  gap: 6px;
  height: 23px;
}
input[type=checkbox] {
  appearance: none;
  flex: none;
  position: relative;
  width: 14px;
  height: 14px;
  margin: 0;
  border: 1px solid #888;
  border-radius: 2px;
  background: #fff;
}
input[type=checkbox]:checked {
  border-color: #2a7de1;
  background: #2a7de1;
}
input[type=checkbox]:checked::after {
  content: "";
  position: absolute;
  left: 4px;
  top: 1px;
  width: 4px;
  height: 8px;
  border: solid #fff;
  border-width: 0 2px 2px 0;
  transform: rotate(42deg);
}

/* panels */
.work {
  flex: 1;
  min-height: 0;
  display: flex;
}
.panel {
  display: flex;
  flex-direction: column;
  border: 1px solid #d2d2d2;
  background: #fff;
}
.strip {
  display: flex;
  justify-content: flex-end;
  height: 11px;
  background: #e6e6e6;
  border-bottom: 1px solid #d8d8d8;
}
.strip button {
  padding-right: 3px;
  font-size: 14px;
  line-height: 10px;
  height: 10px;
  color: #888;
}
.panel h2 {
  height: 22px;
  padding-left: 8px;
  line-height: 21px;
  background: #f1f1f1;
  border-bottom: 1px solid #dadada;
  color: #777;
}
.nav { width: 132px; margin-right: 4px; }
.navtools {
  display: flex;
  align-items: center;
  gap: 4px;
  height: 28px;
  padding-left: 1px;
  border-bottom: 1px solid #ddd;
}
.navtools button {
  justify-content: center;
  width: 24px;
  height: 22px;
  border-radius: 3px;
}
.navtools .on { background: #c2d9f2; }
.navlist { padding-top: 4px; }
.navlist h3, .navlist a {
  display: flex;
  align-items: center;
  height: 25px;
  margin-bottom: 3px;
}
.navlist h3 {
  padding-left: 3px;
  background: #ececec;
}
.navlist a {
  position: relative;
  gap: 13px;
  padding-left: 16px;
  color: inherit;
  text-decoration: none;
  white-space: nowrap;
}
.navlist svg { width: 20px; height: 20px; color: #1a73e8; }
.navlist .orange svg { color: #e8743b; }
.navlist .lime svg { color: #6aa84f; }
.navlist .on { background: #cfe3fb; }
.navlist .hot::after {
  content: "";
  position: absolute;
  left: 39px;
  top: 1px;
  width: 6px;
  height: 6px;
  border-radius: 50%;
  background: red;
}

.middle {
  display: flex;
  flex-direction: column;
  gap: 4px;
  width: 261px;
}
.parts { height: 209px; }
.props { flex: 1; }
.parttools {
  display: flex;
  gap: 8px;
  height: 28px;
  padding: 1px 0 0 3px;
  border-bottom: 1px solid #ddd;
}
.parttools .caret { margin: 0 -2px 0 3px; }
.partsearch {
  display: flex;
  align-items: center;
  height: 19px;
  padding: 0 5px 0 1px;
  border-bottom: 1px solid #ddd;
}
.partsearch input { flex: 1; padding: 0; }
.parttree { padding: 6px 0 0 13px; }
.parttree .caret { display: inline-block; margin: 0 4px 2px 0; }
.chip {
  display: inline-block;
  margin: 4px 0 0 27px;
  padding: 0 6px 0 4px;
  line-height: 21px;
  border-radius: 3px;
  background: #c2d9f2;
}
.props table { width: 258px; table-layout: fixed; }
.props th, .props td {
  height: 21px;
  padding: 0 3px;
  line-height: 18px;
  border: 1px solid #ddd;
  border-width: 0 1px 1px 0;
}
.props td:first-child { text-align: center; }
.props .key { color: #1a5ae8; }
.props .c1 { width: 21px; }
.props .c2 { width: 107px; }
.props .c3 { width: 88px; background: #7fb9fb; color: #fff; }
.expand {
  display: inline-block;
  width: 13px;
  height: 13px;
  margin-right: 6px;
  line-height: 10px;
  text-align: center;
  border: 1px solid #888;
  border-radius: 2px;
}

.vsplit {
  display: flex;
  width: 4px;
}
.vsplit span {
  width: 4px;
  height: 100px;
  margin-top: 264px;
  background: #606a78;
}

/* drawing area */
.center {
  flex: 1;
  min-width: 0;
  display: flex;
  flex-direction: column;
}
.blank {
  height: 27px;
  background: #f1f1f1;
  border-top: 1px solid #d2d2d2;
}
.sheets {
  display: flex;
  height: 21px;
  background: #c3c3c3;
}
.sheets button {
  flex: 0 0 149px;
  gap: 2px;
  padding-left: 2px;
  border-right: 1px solid #8f949a;
  color: #222;
}
.sheets .on { background: #e3e3e3; }
.sheets .list { flex: 1; justify-content: center; padding-top: 3px; border: 0; }
.view {
  flex: 1;
  min-height: 0;
  position: relative;
  background: #000;
  overflow: hidden;
}
.cad { width: 100%; height: 100%; }
.cad path { fill-rule: evenodd; }
.terrain path, .redline, .cyan, .axis, .axis-edge, .magenta, .green, .white, .dash, .curve { fill: none; }
.terrain path { stroke: #555; }
.terrain .dim { stroke: #363636; }
.dash, .terrain .dash { stroke: #3a3a3a; stroke-dasharray: 14 6; }
.curve { stroke: #4a4644; }
.redline { stroke: #f01414; }
.cyan { stroke: #00d8dc; }
.axis-edge { stroke: #b0801e; stroke-width: 4; }
.axis { stroke: #ff3ccf; stroke-width: 2; }
.magenta { stroke: #e010e0; }
.green { stroke: #0d0; }
.white { stroke: #e8e8e8; fill: none; }
.marker { fill: #0c7a0c; stroke: #0f0; stroke-width: 2; }
.hollow { fill: none; stroke: #0f0; stroke-width: 1; }
.note { font-size: 6px; font-weight: bold; fill: #fff; }
.greennote { font-size: 8px; font-weight: bold; fill: #0f0; }
.dims { font-size: 12px; fill: #fff; }
.strip-no { font-size: 12px; fill: #0f0; }
.mid { font-size: 15px; fill: #ccc; }
.ax { font-size: 14px; }
.stn { font: 9px "Liberation Sans", sans-serif; fill: #fff; text-anchor: middle; }
.stn.tan { fill: #e3bda6; }
.viewtools {
  position: absolute;
  right: 0;
  top: 0;
  width: 33px;
  height: 216px;
  display: flex;
  flex-direction: column;
  align-items: center;
  gap: 9px;
  padding-top: 12px;
  background: #fff;
  border: 1px solid #ccc;
  border-radius: 3px;
}
.viewtools svg { width: 20px; height: 20px; }
.viewtools .caret { margin-bottom: -3px; }
.viewtools hr {
  width: 23px;
  margin: -2px 0;
  border: 0;
  border-top: 1px solid #444;
}
.hint {
  position: absolute;
  left: 0;
  right: 0;
  bottom: 0;
  display: flex;
  justify-content: center;
  align-items: center;
  gap: 4px;
  height: 27px;
  background: rgba(54, 54, 54, .76);
  color: #fff;
}
.hint path { fill: none; stroke: #fff; }
.hsplit {
  display: flex;
  justify-content: center;
  height: 4px;
}
.hsplit span {
  width: 100px;
  background: #606a78;
}

/* quantities */
.result { height: 239px; }
.resulttools {
  display: flex;
  align-items: center;
  gap: 8px;
  height: 28px;
  padding-left: 6px;
}
.resulttools label { display: flex; align-items: center; gap: 7px; }
.resulttools input {
  appearance: none;
  width: 14px;
  height: 14px;
  margin: 0;
  border: 1px solid #777;
  border-radius: 50%;
}
.resulttools input:checked {
  border-color: #2a7de1;
  background: radial-gradient(#2a7de1 0 3px, #fff 4px);
}
.bar { height: 18px; border-left: 1px solid #ddd; margin-left: 2px; }
.result table { width: 100%; table-layout: fixed; }
.result th {
  height: 20px;
  padding: 0;
  border: 1px solid #ddd;
  border-left: 0;
}
.w1 { width: 120px; }
.w2 { width: 41px; }
.w3 { width: 61px; }
.toastbox { padding-top: 25px; text-align: center; }
.toast {
  display: inline-block;
  padding: 0 10px;
  line-height: 24px;
  border: 1px solid #bbb;
  border-radius: 2px;
  background: #a0a0a0;
  color: #fff;
}

/* display settings */
.display { width: 302px; border-right: 0; }
.display .strip button { padding-right: 0; }
.dtabs {
  display: flex;
  align-items: flex-end;
  gap: 3px;
  height: 28px;
  padding-left: 2px;
  border-bottom: 1px solid #bfc3c8;
}
.dtabs button {
  justify-content: center;
  width: 60px;
  height: 22px;
  border-radius: 3px 3px 0 0;
  background: #dedede;
}
.dtabs .on {
  width: 62px;
  height: 25px;
  margin-bottom: -1px;
  border: 1px solid #bfc3c8;
  border-bottom: 0;
  background: #fff;
  color: #2a7de1;
}
.dbody {
  flex: 1;
  min-height: 0;
  margin: 2px 0 0 2px;
  padding: 1px 0 0 9px;
  border: 1px solid #bfc3c8;
  border-right: 0;
}
.layers li {
  display: flex;
  align-items: center;
  height: 24px;
}
.layers label { display: flex; align-items: center; gap: 6px; }
.layers .twist {
  display: flex;
  justify-content: center;
  width: 8px;
  margin-right: 7px;
}
.layers .sub { padding-left: 20px; }
.layers .closed .caret { transform: rotate(-90deg); }
.dfoot {
  display: flex;
  justify-content: space-between;
  align-items: center;
  height: 38px;
  padding: 3px 5px 0 2px;
}
.dfoot .check { gap: 3px; }
.dfoot button {
  height: 26px;
  padding: 0 8px;
  border: 1px solid #c4c4c4;
  border-radius: 3px;
}

/* status bar */
.status {
  position: relative;
  display: flex;
  align-items: center;
  height: 33px;
  padding: 1px 2px 0;
  background: #fcfcfc;
  border-bottom: 1px solid #111;
}
.coord { width: 295px; }
.picked { width: 115px; }
.modes, .zoomer { display: flex; align-items: center; gap: 3px; }
.modes button, .zoomer button {
  justify-content: center;
  width: 25px;
  height: 25px;
  border: 1px solid #999;
  border-radius: 3px;
  background: #fff;
}
.modes .on {
  width: 36px;
  border-color: #3d87e4;
  background: #d8e6fb;
}
.zoomer { margin-left: auto; }
.zoomer label { margin-right: 5px; }
.zoomer input {
  appearance: none;
  width: 45px;
  height: 18px;
  margin: 0 -3px;
  background: linear-gradient(#bbb, #bbb) center / 100% 2px no-repeat;
}
.zoomer input::-webkit-slider-thumb {
  appearance: none;
  width: 7px;
  height: 18px;
  border: 1px solid #777;
  border-radius: 2px;
  background: #fff;
}
.pick { position: relative; }
.pick::after {
  content: "";
  position: absolute;
  right: 4px;
  top: 11px;
  border: 3px solid transparent;
  border-top: 4px solid #555;
  border-bottom: 0;
}
.pick select {
  appearance: none;
  display: block;
  height: 25px;
  padding: 0 4px;
  border: 1px solid #2a8cf0;
}
.layer select { width: 72px; background: #d3e3fa; border-radius: 2px; }
.scale select { width: 60px; background: #fff; }
.lock { margin-left: 3px; }
.mark {
  position: absolute;
  right: 2px;
  bottom: 0;
  width: 193px;
  height: 82px;
  border: 3px solid #ff2014;
  border-radius: 3px;
  pointer-events: none;
}
```

FILE: app.js
```js
const nav = [
  ["基本", [["road", "道路中心线(Z)", "on"]]],
  ["土方工程", [["earth", "大型土方(T)"], ["pit", "基坑(K)"], ["ditch", "沟槽(C)"]]],
  ["道路工程", [["pave", "路面(M)"], ["curb", "路缘石(Y)"], ["tree", "树池(S)"], ["bed", "路基(L)"], ["soft", "软基(R)"]]],
  ["交通标志标线", [["car", "标记(J)"], ["lines", "标线(X)"]]],
  ["排水工程", [["well", "雨水井(J)", "hot"], ["pipe", "雨水管(G)"], ["inlet", "雨水口(S)"], ["well", "污水井(W)", "hot orange"], ["pipe", "污水管(P)", "orange"]]],
  ["给水工程", [["pipe", "给水管(E)", "lime"], ["node", "给水节点(D)", "hot"]]],
  ["自定义", [["custom", "自定义井图集", "hot"]]]
];

document.getElementById("navlist").innerHTML = nav.map(([name, items]) =>
  `<h3>${name}</h3>` + items.map(([icon, text, cls]) =>
    `<a href="#" class="${cls || ""}"><svg><use href="#n-${icon}"/></svg>${text}</a>`).join("")
).join("");

// "+" marks a node that can be expanded
const layers = [
  ["基本", ["+道路中心线"]],
  ["土方工程", ["大型土方", "基坑", "沟槽"]],
  ["道路工程", ["+路面", "+路缘石", "+树池", "+路基", "软基"]],
  ["交通标志标线", ["+标记", "标线"]],
  ["排水工程", ["雨水井", "雨水管", "雨水口", "污水井", "污水管"]],
  ["给水工程", ["给水管", "给水节点"]],
  ["自定义", ["自定义井图集"]]
];

function layerRow(text, cls, caret) {
  return `<li class="${cls}"><span class="twist">${caret ? '<i class="caret"></i>' : ""}</span><label><input type="checkbox" checked>${text}</label></li>`;
}

document.getElementById("layers").innerHTML = layers.map(([name, subs]) =>
  layerRow(name, "", true) + subs.map(s =>
    layerRow(s.replace("+", ""), "sub closed", s[0] === "+")).join("")
).join("");

// tree pits along both kerbs
let marks = "";
for (let k = 0; k <= 36; k++) {
  const x = 413 + 29 * k;
  if (k < 8 || k > 9) marks += `<rect class="marker" x="${x}" y="${Math.round(434 - k * 0.28)}" width="5" height="6"/>`;
  if (k < 18 || k > 21) marks += `<rect class="marker" x="${x}" y="${Math.round(499 - k * 0.3)}" width="5" height="6"/>`;
}
[[1530, 191], [1532, 220], [1535, 249], [1537, 278], [1540, 307], [1564, 596], [1567, 625], [1569, 653], [1572, 682], [1574, 711], [1576, 740]]
  .forEach(([x, y]) => { marks += `<rect class="hollow" x="${x}" y="${y}" width="5" height="6"/>`; });
document.getElementById("markers").innerHTML = marks;

// station labels
function stn(text, x, y, angle, cls) {
  return `<text class="stn ${cls || ""}" transform="translate(${x} ${y}) rotate(${angle})">${text}</text>`;
}
let labels = "";
for (let i = 0; i < 11; i++) {
  const x = 412 + Math.round(96.6 * i);
  const y = 469 - i;
  const text = "K0+" + String(60 + 20 * i).padStart(3, "0");
  labels += stn(text, x, y, -90) + stn(text, x + 12, y, -90, "tan");
  labels += `<path class="white" d="M${x + 4} ${y - 7}v14"/>`;
}
labels += stn("K0+276.54", 1458, 459, -90) + stn("K0+276.54", 1470, 459, -90);
labels += stn("K0+280", 1479, 459, -90) + stn("K0+280", 1487, 459, -90);
labels += stn("K0+300", 1564, 458, -90) + stn("K0+300", 1583, 458, -90);
labels += stn("K0+303.901", 1592, 458, -90) + stn("K0+303.901", 1603, 458, -90);
labels += stn("K1+240", 1576, 209, 180) + stn("20", 1572, 308, 180);
labels += stn("K1+200", 1592, 405, 180) + stn("K1+188.045", 1586, 475, 180);
labels += stn("K1+180", 1594, 500, 180) + stn("+160", 1600, 597, 180) + stn("40", 1605, 693, 180);
document.getElementById("stations").innerHTML = labels;
```
